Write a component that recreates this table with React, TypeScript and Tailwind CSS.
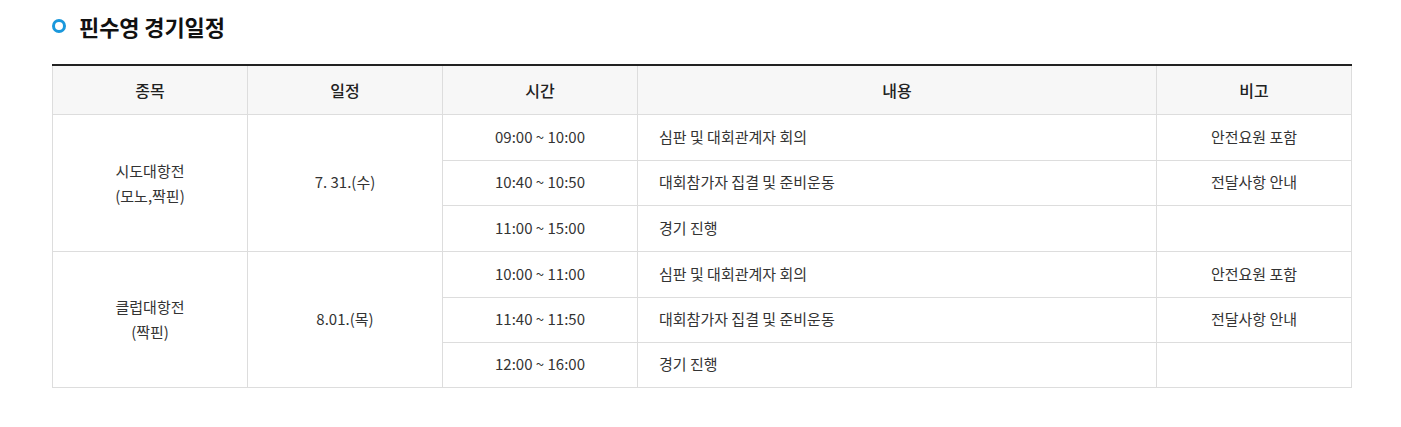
import React from "react";

const rows = [
  { group: 0, time: "09:00 ~ 10:00", desc: "심판 및 대회관계자 회의", note: "안전요원 포함" },
  { group: 0, time: "10:40 ~ 10:50", desc: "대회참가자 집결 및 준비운동", note: "전달사항 안내" },
  { group: 0, time: "11:00 ~ 15:00", desc: "경기 진행", note: "" },
  { group: 1, time: "10:00 ~ 11:00", desc: "심판 및 대회관계자 회의", note: "안전요원 포함" },
  { group: 1, time: "11:40 ~ 11:50", desc: "대회참가자 집결 및 준비운동", note: "전달사항 안내" },
  { group: 1, time: "12:00 ~ 16:00", desc: "경기 진행", note: "" },
];

const groups = [
  { name: ["시도대항전", "(모노,짝핀)"], date: "7. 31.(수)" },
  { name: ["클럽대항전", "(짝핀)"], date: "8.01.(목)" },
];

const heights = ["h-[46px]", "h-[45px]", "h-[46px]", "h-[46px]", "h-[45px]", "h-[45px]"];

export default function App() {
  return (
    <div
      className="bg-white w-[1401px] h-[427px] pl-[52px] pt-[12px] text-[#333]"
      style={{ fontFamily: '"Noto Sans CJK KR", "Noto Sans", sans-serif' }}
    >
      <div className="flex items-center gap-[13px] h-[28px]">
        <span className="w-[14px] h-[14px] rounded-full border-[3px] border-[#1a98dc]" />
        <h2 className="text-[22px] font-bold text-[#111] tracking-[-0.1px] leading-none">핀수영 경기일정</h2>
      </div>
      <table className="mt-[24px] w-[1299px] border-collapse border-t-2 border-t-[#222] table-fixed text-center">
        <colgroup>
          <col className="w-[195px]" />
          <col className="w-[195px]" />
          <col className="w-[195px]" />
          <col className="w-[519px]" />
          <col className="w-[195px]" />
        </colgroup>
        <thead>
          <tr className="bg-[#f7f7f7] h-[49px]">
            {["종목", "일정", "시간", "내용", "비고"].map((h) => (
              <th key={h} className="border border-[#dddddd] border-t-0 text-[16px] font-medium text-[#222]">
                {h}
              </th>
            ))}
          </tr>
        </thead>
        <tbody className="text-[15px]">
          {rows.map((r, i) => (
            <tr key={i} className={heights[i]}>
              {i % 3 === 0 && (
                <>
                  <td rowSpan={3} className="border border-[#dddddd] leading-[25px]">
                    {groups[r.group].name[0]}
                    <br />
                    {groups[r.group].name[1]}
                  </td>
                  <td rowSpan={3} className="border border-[#dddddd]">
                    {groups[r.group].date}
                  </td>
                </>
              )}
              <td className="border border-[#dddddd]">{r.time}</td>
              <td className="border border-[#dddddd] text-left pl-[21px]">{r.desc}</td>
              <td className="border border-[#dddddd]">{r.note}</td>
            </tr>
          ))}
        </tbody>
      </table>
    </div>
  );
}
